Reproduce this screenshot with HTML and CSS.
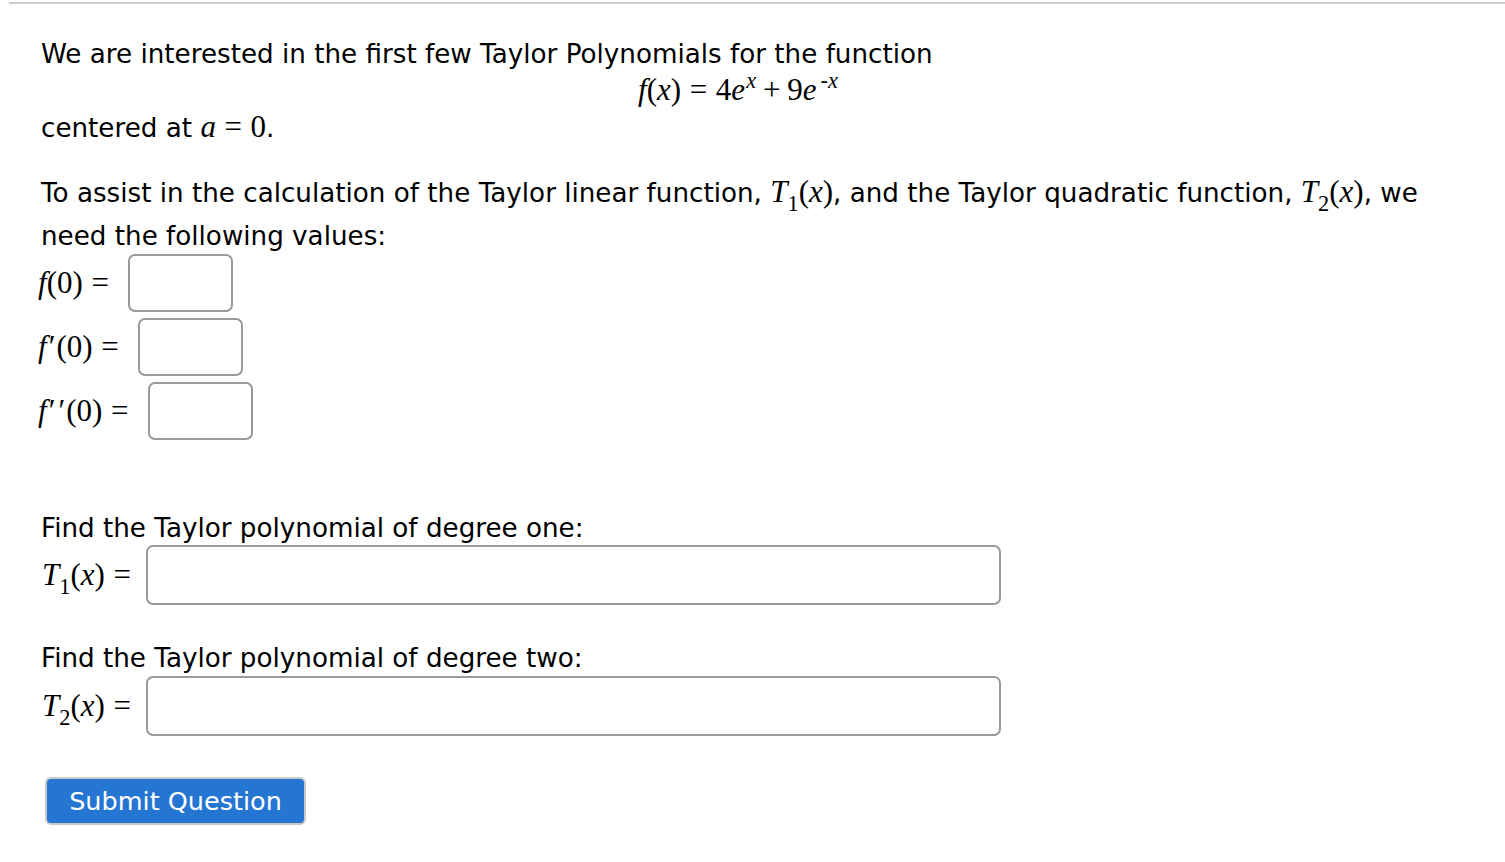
FILE: index.html
```html
<!DOCTYPE html>
<html>
<head>
<meta charset="utf-8">
<link rel="stylesheet" href="styles.css">
</head>
<body>
<div class="rule"></div>
<div class="problem">
  <p class="line l1">We are interested in the first few Taylor Polynomials for the function</p>
  <div class="display"><span class="m"><i>f</i>(<i>x</i>)<span class="rel">=</span>4<i>e</i><sup><i>x</i></sup><span class="bin">+</span>9<i>e</i><sup class="neg">-<i>x</i></sup></span></div>
  <p class="line l2">centered at <span class="m"><i>a</i><span class="rel">=</span>0</span>.</p>
  <p class="para">To assist in the calculation of the Taylor linear function, <span class="m"><i>T</i><sub>1</sub>(<i>x</i>)</span>, and the Taylor quadratic function, <span class="m"><i>T</i><sub>2</sub>(<i>x</i>)</span>, we need the following values:</p>
  <div class="vals">
    <div class="row"><span class="m lab"><i>f</i>(0)<span class="rel">=</span></span><span class="box small"></span></div>
    <div class="row"><span class="m lab"><i>f</i><span class="pr">′</span>(0)<span class="rel">=</span></span><span class="box small"></span></div>
    <div class="row"><span class="m lab"><i>f</i><span class="pr">′</span><span class="pr">′</span>(0)<span class="rel">=</span></span><span class="box small"></span></div>
  </div>
  <p class="line find1">Find the Taylor polynomial of degree one:</p>
  <div class="row wide"><span class="m lab"><i>T</i><sub>1</sub>(<i>x</i>)<span class="rel">=</span></span><span class="box big"></span></div>
  <p class="line find2">Find the Taylor polynomial of degree two:</p>
  <div class="row wide"><span class="m lab"><i>T</i><sub>2</sub>(<i>x</i>)<span class="rel">=</span></span><span class="box big"></span></div>
  <div class="btnrow"><button class="submit">Submit Question</button></div>
</div>
</body>
</html>
```
FILE: styles.css
```css
html, body { margin: 0; padding: 0; background: #fff; }
body { font-family: "DejaVu Sans", sans-serif; font-size: 26.2px; color: #000; }
.rule { margin: 2px 0 0 9px; border-top: 2px solid #cccccc; }
.problem { padding-left: 41px; }
p { margin: 0; }
.m { font-family: "Liberation Serif", serif; font-size: 31px; }
.m i { font-style: italic; }
.rel { margin: 0 0.278em; }
.bin { margin: 0 0.222em; }
.pr { margin-left: 2px; margin-right: 1px; }
sup { font-size: 0.72em; vertical-align: 0.55em; line-height: 0; margin-left: 1px; }
sup.neg { margin-left: 4px; }
sub { font-size: 0.72em; vertical-align: -0.4em; line-height: 0; }
.l1 { margin-top: 32px; line-height: 36px; }
.display { text-align: center; line-height: 36px; padding-right: 70px; }
.l2 { line-height: 36px; margin-top: 0; }
.para { margin-top: 24px; line-height: 43px; padding-right: 40px; }
.vals { display: flex; flex-direction: column; gap: 6px; margin-top: -4px; margin-left: -3px; }
.row { display: flex; align-items: center; gap: 11px; }
.box { display: inline-block; border: 2px solid #999; border-radius: 7px; box-sizing: border-box; background: #fff; }
.box.small { width: 105px; height: 58px; }
.box.big { width: 855px; height: 60px; }
.find1 { margin-top: 70px; line-height: 36px; }
.find2 { margin-top: 35px; line-height: 36px; }
.wide { margin-top: -1px; gap: 6px; }
.find2 + .wide { margin-top: 0; }
.wide .lab { margin-left: 1px; }
.btnrow { margin-top: 41px; margin-left: 4px; }
.submit { font-family: "DejaVu Sans", sans-serif; font-size: 25.5px; color: #fff; background: #2576d2; border: 2px solid #c8c8c8; border-radius: 6px; width: 261px; height: 48px; padding: 0; }
```
